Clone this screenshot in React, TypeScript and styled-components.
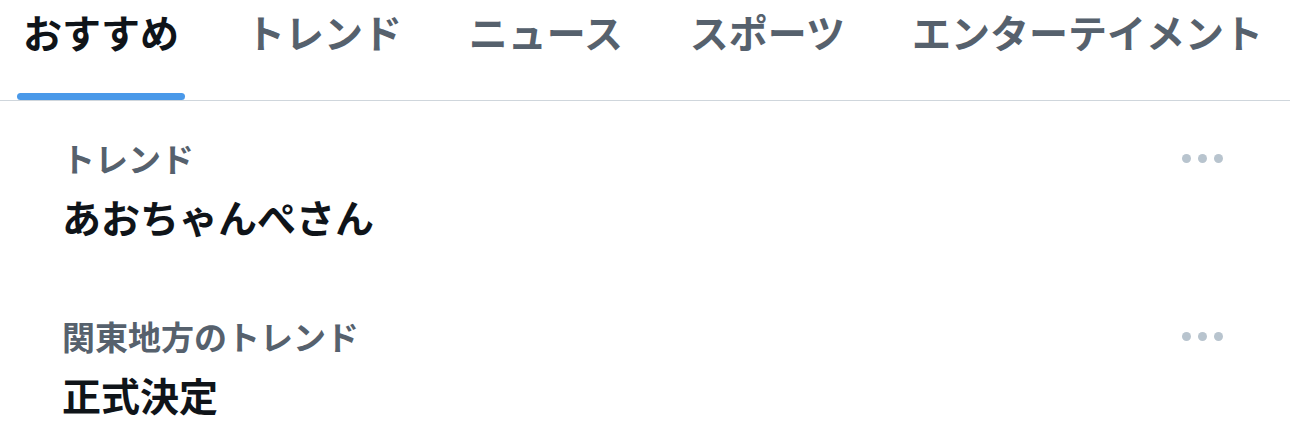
import styled, { createGlobalStyle } from "styled-components";

const GlobalStyle = createGlobalStyle`
  html, body {
    margin: 0;
    padding: 0;
    background: #ffffff;
  }
  body {
    font-family: "Noto Sans CJK JP", "Noto Sans", sans-serif;
    color: #0f1419;
  }
`;

const TabBar = styled.nav`
  display: flex;
  justify-content: space-between;
  height: 100px;
  padding: 0 21px 0 17px;
  border-bottom: 1px solid #cfd6dc;
`;

const Tab = styled.div<{ $active?: boolean }>`
  display: flex;
  flex-direction: column;
  align-items: stretch;
  padding: 6px 6px 0;
  font-size: 39px;
  font-weight: 700;
  line-height: 50px;
  white-space: nowrap;
  color: ${(p) => (p.$active ? "#0f1419" : "#56616d")};
`;

const Indicator = styled.div`
  margin-top: auto;
  margin-left: -6px;
  margin-right: -6px;
  height: 7px;
  border-radius: 4px;
  background: #4a99e9;
`;

const Trend = styled.div`
  padding: 35px 67px 38px 62px;
`;

const TrendHeader = styled.div`
  display: flex;
  align-items: center;
  justify-content: space-between;
`;

const Context = styled.div`
  font-size: 33px;
  font-weight: 700;
  line-height: 44px;
  color: #56616d;
`;

const Title = styled.div`
  margin-top: 11px;
  font-size: 39px;
  font-weight: 700;
  line-height: 50px;
  color: #0f1419;
`;

const More = styled.div`
  display: flex;
  gap: 7px;
`;

const Dot = styled.span`
  width: 9px;
  height: 9px;
  border-radius: 50%;
  background: #b8c4ce;
`;

const tabs = ["おすすめ", "トレンド", "ニュース", "スポーツ", "エンターテイメント"];

const trends = [
  { context: "トレンド", title: "あおちゃんぺさん" },
  { context: "関東地方のトレンド", title: "正式決定" },
];

export default function App() {
  return (
    <>
      <GlobalStyle />
      <TabBar>
        {tabs.map((t, i) => (
          <Tab key={t} $active={i === 0}>
            {t}
            {i === 0 && <Indicator />}
          </Tab>
        ))}
      </TabBar>
      {trends.map((t) => (
        <Trend key={t.title}>
          <TrendHeader>
            <Context>{t.context}</Context>
            <More>
              <Dot />
              <Dot />
              <Dot />
            </More>
          </TrendHeader>
          <Title>{t.title}</Title>
        </Trend>
      ))}
    </>
  );
}
